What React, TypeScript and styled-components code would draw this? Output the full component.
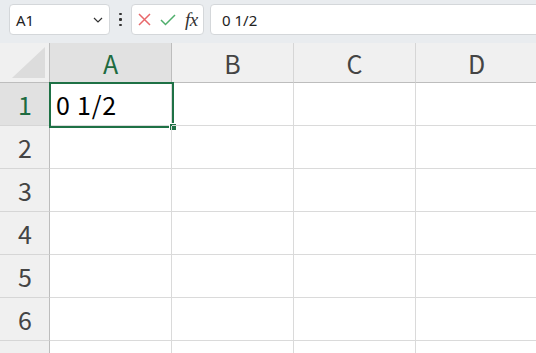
import React from "react";
import styled, { createGlobalStyle } from "styled-components";

const Global = createGlobalStyle`
  html, body { margin: 0; padding: 0; background: #ffffff; overflow: hidden; }
  body { font-family: "Noto Sans CJK JP", "Noto Sans", sans-serif; }
`;

const Page = styled.div`
  width: 536px;
  height: 353px;
  overflow: hidden;
  display: flex;
  flex-direction: column;
`;

const Toolbar = styled.div`
  height: 43px;
  flex: none;
  background: #e9ecef;
  display: flex;
  align-items: flex-start;
  padding: 4px 0 0 9px;
  box-sizing: border-box;
`;

const Box = styled.div<{ $w?: number; $grow?: boolean }>`
  height: 31px;
  box-sizing: border-box;
  background: #ffffff;
  border: 1px solid #d4d7da;
  border-radius: 4px;
  display: flex;
  align-items: center;
  ${(p) => (p.$w ? `width: ${p.$w}px;` : "")}
  ${(p) => (p.$grow ? "flex: 1; margin-right: -8px;" : "flex: none;")}
`;

const NameText = styled.span`
  flex: 1;
  padding-left: 6px;
  font-family: "Noto Sans", sans-serif;
  font-size: 15px;
  color: #222;
`;

const Chevron = styled.svg`
  width: 10px;
  height: 6px;
  margin-right: 6px;
`;

const Dots = styled.div`
  width: 21px;
  height: 31px;
  display: flex;
  flex-direction: column;
  align-items: center;
  justify-content: center;
  gap: 3px;
  span {
    width: 2.5px;
    height: 2.5px;
    background: #333;
    border-radius: 1px;
  }
`;

const IconRow = styled.div`
  display: flex;
  align-items: center;
  padding-left: 6px;
  gap: 9px;
`;

const Fx = styled.span`
  font-family: "Liberation Serif", "DejaVu Serif", serif;
  font-style: italic;
  font-size: 19px;
  color: #333;
  letter-spacing: -0.5px;
  line-height: 1;
`;

const FormulaText = styled.span`
  padding-left: 11px;
  font-family: "Noto Sans", sans-serif;
  font-size: 15px;
  color: #222;
`;

const Gap = styled.div<{ $w: number }>`
  width: ${(p) => p.$w}px;
  flex: none;
`;

const Grid = styled.div`
  display: grid;
  grid-template-columns: 50px repeat(4, 122px);
  grid-auto-rows: 43px;
  grid-template-rows: 40px;
`;

const Corner = styled.div`
  background: #f0f0f0;
  border-right: 1px solid #bdbdbd;
  border-bottom: 1px solid #bdbdbd;
  box-sizing: border-box;
  display: flex;
  align-items: flex-end;
  justify-content: flex-end;
  padding: 0 4px 4px 0;
  svg { width: 33px; height: 31px; }
`;

const ColHead = styled.div<{ $sel?: boolean }>`
  background: ${(p) => (p.$sel ? "#e1e1e1" : "#f0f0f0")};
  border-right: 1px solid ${(p) => (p.$sel ? "#bdbdbd" : "#d6d6d6")};
  border-bottom: 1px solid #bdbdbd;
  box-sizing: border-box;
  display: flex;
  align-items: center;
  justify-content: center;
  font-size: 25px;
  color: ${(p) => (p.$sel ? "#1d6b40" : "#444")};
  padding-top: 1px;
`;

const RowHead = styled.div<{ $sel?: boolean }>`
  background: ${(p) => (p.$sel ? "#e1e1e1" : "#f0f0f0")};
  border-right: 1px solid #bdbdbd;
  border-bottom: 1px solid #d6d6d6;
  box-sizing: border-box;
  display: flex;
  align-items: center;
  justify-content: center;
  font-size: 25px;
  color: ${(p) => (p.$sel ? "#1d6b40" : "#444")};
  padding-left: 1px;
`;

const Cell = styled.div`
  position: relative;
  border-right: 1px solid #dadada;
  border-bottom: 1px solid #dadada;
  box-sizing: border-box;
  display: flex;
  align-items: center;
  padding-left: 6px;
  font-size: 25px;
  letter-spacing: 0.8px;
  color: #000;
  white-space: nowrap;
`;

const Selection = styled.div`
  position: absolute;
  left: -1px;
  top: -1px;
  width: 125px;
  height: 46px;
  box-sizing: border-box;
  border: 2px solid #1e7145;
  pointer-events: none;
`;

const Handle = styled.div`
  position: absolute;
  right: -4px;
  bottom: -4px;
  width: 6px;
  height: 6px;
  background: #1e7145;
  border-left: 1px solid #fff;
  border-top: 1px solid #fff;
`;

const cols = ["A", "B", "C", "D"];
const rows = [1, 2, 3, 4, 5, 6, 7];

export default function App() {
  return (
    <>
      <Global />
      <Page>
        <Toolbar>
          <Box $w={101}>
            <NameText>A1</NameText>
            <Chevron viewBox="0 0 10 6">
              <path d="M1 1 L5 5 L9 1" fill="none" stroke="#333" strokeWidth="1.2" />
            </Chevron>
          </Box>
          <Dots>
            <span />
            <span />
            <span />
          </Dots>
          <Box $w={73}>
            <IconRow>
              <svg width="13" height="13" viewBox="0 0 13 13">
                <path d="M1 1 L12 12 M12 1 L1 12" stroke="#e8686b" strokeWidth="1.5" fill="none" />
              </svg>
              <svg width="16" height="12" viewBox="0 0 16 12">
                <path d="M1 6 L5.5 10.5 L15 1" stroke="#4fae6c" strokeWidth="1.5" fill="none" />
              </svg>
              <Fx>fx</Fx>
            </IconRow>
          </Box>
          <Gap $w={6} />
          <Box $grow>
            <FormulaText>0 1/2</FormulaText>
          </Box>
        </Toolbar>
        <Grid>
          <Corner>
            <svg viewBox="0 0 33 31">
              <path d="M33 0 L33 31 L0 31 Z" fill="#dcdcdc" />
            </svg>
          </Corner>
          {cols.map((c) => (
            <ColHead key={c} $sel={c === "A"}>
              {c}
            </ColHead>
          ))}
          {rows.map((r) => (
            <React.Fragment key={r}>
              <RowHead $sel={r === 1}>{r}</RowHead>
              {cols.map((c) => (
                <Cell key={c}>
                  {r === 1 && c === "A" && (
                    <>
                      0 1/2
                      <Selection>
                        <Handle />
                      </Selection>
                    </>
                  )}
                </Cell>
              ))}
            </React.Fragment>
          ))}
        </Grid>
      </Page>
    </>
  );
}
